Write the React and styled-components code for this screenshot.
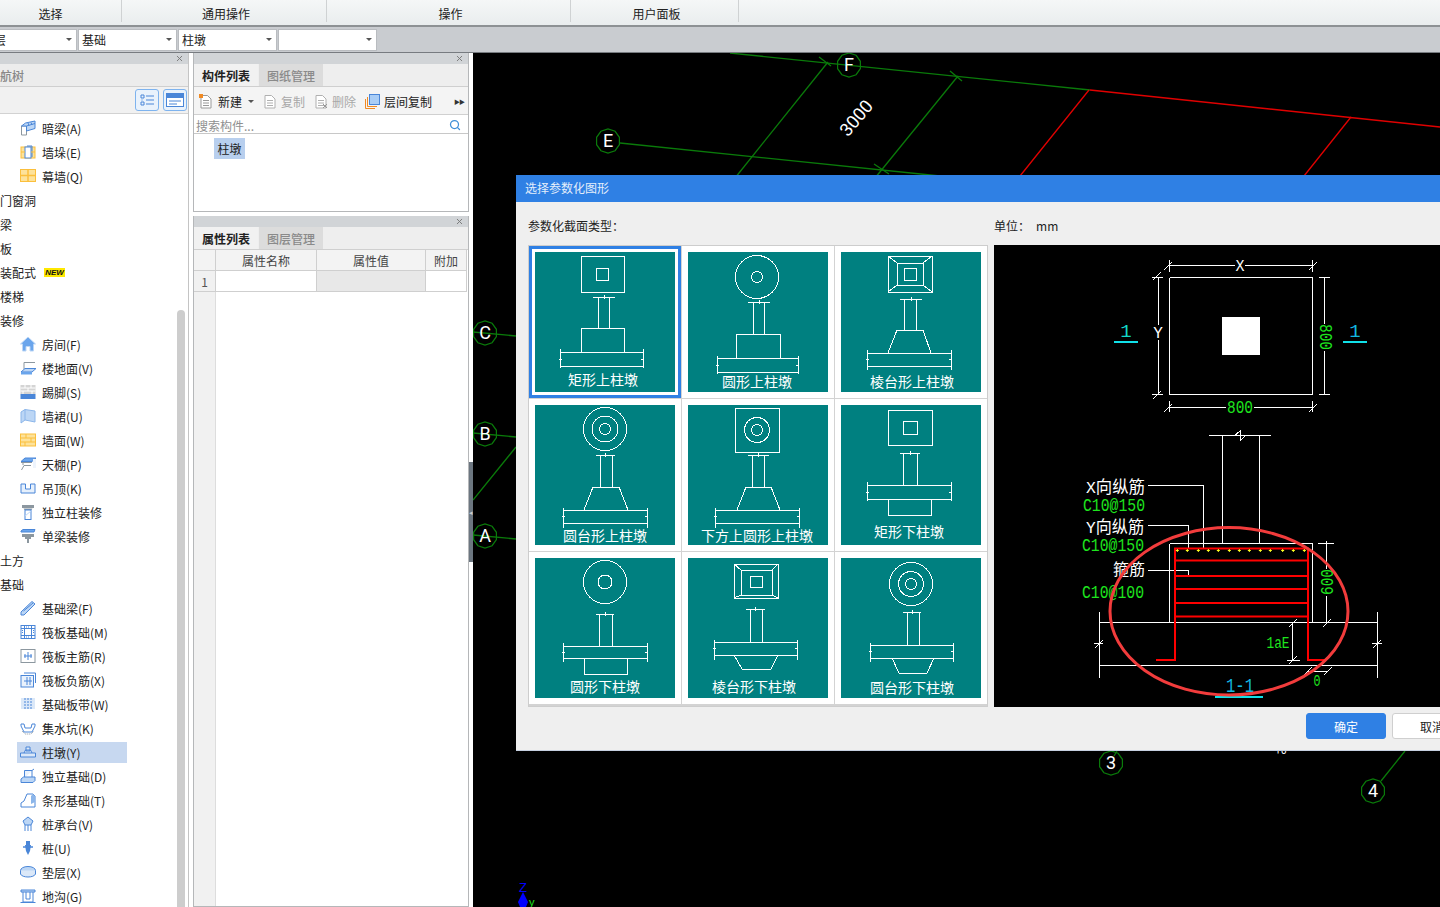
import React from 'react';
import styled, { createGlobalStyle } from 'styled-components';
import { Search, X as CloseGlyph } from 'lucide-react';

const Global = createGlobalStyle`
  html, body { margin: 0; padding: 0; height: 100%; overflow: hidden; background: #fff; }
  #root { height: 100%; }
  * { box-sizing: border-box; }
`;

const Page = styled.div`
  width: 1440px; height: 907px; display: flex; flex-direction: column; overflow: hidden;
  font-family: "Noto Sans CJK SC", "Liberation Sans", sans-serif; font-size: 12px; color: #222;
`;

const MenuBar = styled.div`
  height: 27px; flex: none; display: flex; overflow: hidden;
  background: linear-gradient(#f5f7f7, #e9edee); border-bottom: 2px solid #8d9194;
`;
const MenuSection = styled.div`
  width: ${p => p.$w}px; margin-left: ${p => p.$ml || 0}px; height: 22px; padding-top: 6px;
  padding-left: ${p => (p.$ml ? 0 : 4)}px;
  display: flex; justify-content: center; align-items: center; line-height: 16px;
  border-right: 1px solid #cfd2d3;
`;

const ComboBar = styled.div`
  height: 26px; flex: none; display: flex; align-items: flex-start; gap: 1px; padding-top: 2px;
  background: #c9ccd0; border-bottom: 1px solid #777b80; overflow: hidden;
`;
const Combo = styled.div`
  width: 99px; margin-left: ${p => p.$ml || 0}px; height: 22px; background: #fff;
  border: 1px solid #b9bcc0; display: flex; align-items: center;
  padding: 0 4px 2px 3px;
  &::after { content: ""; margin-left: auto; border: 3px solid transparent; border-top: 3px solid #555; border-bottom: 0; }
`;
const ComboClipped = styled.span`margin-left: 12px;`;

const Main = styled.div`flex: 1; display: flex; min-height: 0;`;

const LeftPanel = styled.div`
  width: 189px; flex: none; display: flex; flex-direction: column; border-right: 1px solid #c4c4c4; overflow: hidden;
`;
const CloseStrip = styled.div`
  height: 11px; flex: none; background: #d1d4d7; display: flex; align-items: center; justify-content: flex-end; padding-right: 4px; color: #777;
`;
const TreeTitle = styled.div`
  height: 23px; flex: none; background: #ececec; border-bottom: 1px solid #cfcfcf; color: #888; font-weight: 500;
  display: flex; align-items: center; margin-left: -12px; padding-left: 0;
`;
const TreeTools = styled.div`
  height: 27px; flex: none; background: #f1f1f1; border-bottom: 1px solid #d2d2d2;
  display: flex; justify-content: flex-end; align-items: center; gap: 4px; padding-right: 1px;
`;
const ViewButton = styled.div`
  width: 24px; height: 22px; border: 1px solid #7eb3ee; border-radius: 3px; background: #e9f2fc;
  display: flex; align-items: center; justify-content: center;
`;
const Tree = styled.div`
  flex: 1; position: relative; background: #fff; padding-top: 2px; overflow: hidden;
`;
const TreeRow = styled.div`height: 24px; display: flex; align-items: center;`;
const TreeLabel = styled.div`
  display: flex; align-items: center; gap: 6px; height: 21px; width: 110px; margin-left: 17px; padding-left: 3px; white-space: nowrap;
  background: ${p => (p.$active ? '#c7d8f0' : 'transparent')};
`;
const TreeGroup = styled.div`display: flex; align-items: center; gap: 8px; white-space: nowrap;`;
const NewBadge = styled.span`
  background: #ffe800; color: #111; font: italic 700 8px/9px "Liberation Sans", sans-serif; width: 21px; height: 9px; text-align: center;
`;
const ScrollThumb = styled.div`
  position: absolute; left: 177px; top: 196px; bottom: 0; width: 8px; background: #cdcdcd; border-radius: 4px 4px 0 0;
`;
const IconSvg = styled.svg`width: 16px; height: 16px; flex: none; display: block;`;

const Center = styled.div`
  width: 276px; flex: none; margin-left: 4px; display: flex; flex-direction: column; gap: 4px; min-height: 0;
`;
const SidePanel = styled.div`
  height: ${p => (p.$fill ? 'auto' : '159px')}; flex: ${p => (p.$fill ? 1 : 'none')}; min-height: 0;
  display: flex; flex-direction: column; border: 1px solid #b5b7b9; border-top: 0; background: #fff;
`;
const TabRow = styled.div`
  height: 23px; flex: none; display: flex; background: #eeeeee; border-bottom: 1px solid #cfcfcf;
`;
const Tab = styled.div`
  width: 64px; margin-right: 1px; display: flex; align-items: center; justify-content: center;
  background: ${p => (p.$on ? '#f1f1f1' : '#dcdcdc')}; color: ${p => (p.$on ? '#222' : '#8a8a8a')}; font-weight: ${p => (p.$on ? 700 : 500)};
`;
const ToolRow = styled.div`
  height: 28px; flex: none; display: flex; align-items: center; gap: 9px; padding: 1px 5px 0; background: #f4f4f4; border-bottom: 1px solid #d0d0d0;
`;
const ToolItem = styled.div`
  display: flex; align-items: center; gap: 4px; color: ${p => (p.$off ? '#a8a8a8' : '#222')};
`;
const Caret = styled.span`
  width: 0; height: 0; border: 3px solid transparent; border-top-color: #555; border-bottom: 0; margin-left: 2px;
`;
const More = styled.div`margin-left: auto; margin-right: -1px; font-size: 6px; color: #333; letter-spacing: -1px;`;
const SearchBox = styled.div`
  height: 19px; flex: none; display: flex; align-items: center; justify-content: space-between; padding: 2px 7px 0 2px; color: #8f8f8f; border-bottom: 1px solid #c8c8c8;
`;
const CompList = styled.div`flex: 1; padding: 4px 0 0 20px;`;
const CompItem = styled.div`
  width: 31px; height: 21px; background: #b8cfee; display: flex; align-items: center; justify-content: center;
`;
const PropBody = styled.div`
  flex: 1; display: grid; grid-template-columns: 22px 101px 109px 41px; grid-template-rows: 21px 21px 1fr; background: #fff; min-height: 0;
`;
const HeadCell = styled.div`
  background: #f3f3f3; color: #444; display: flex; align-items: center; justify-content: center;
  border-right: 1px solid #cfcfcf; border-bottom: 1px solid #cfcfcf;
`;
const RowCell = styled.div`
  background: ${p => p.$bg || '#fff'}; display: flex; align-items: center; justify-content: center;
  border-right: 1px solid #cfcfcf; border-bottom: 1px solid #cfcfcf; color: #555;
`;
const IndexFill = styled.div`background: #f1f1f1; border-right: 1px solid #dddddd;`;

const GripColumn = styled.div`width: 4px; flex: none; padding-top: 409px; background: #fff;`;
const Grip = styled.div`
  width: 4px; height: 100px; background: #6c7680; display: flex; align-items: center; color: #ccc; font-size: 7px; overflow: hidden;
`;

const Canvas = styled.div`flex: 1; position: relative; background: #000; overflow: hidden; min-width: 0;`;
const CanvasSvg = styled.svg`position: absolute; left: 0; top: 0; width: 967px; height: 854px; display: block;`;

const Dialog = styled.div`
  position: absolute; left: 43px; top: 122px; width: 970px; height: 576px; background: #efefef;
  border-bottom: 1px solid #c6d0e0; display: flex; flex-direction: column;
`;
const DialogTitle = styled.div`
  height: 27px; flex: none; background: #2f80e4; color: #e4eefb; display: flex; align-items: center; padding: 0 0 2px 9px;
`;
const DialogBody = styled.div`
  display: grid; grid-template-columns: 460px 1fr; column-gap: 6px; padding: 16px 0 0 12px; flex: none;
`;
const FieldLabel = styled.div`height: 16px; line-height: 16px; margin-bottom: 11px; display: flex; gap: 6px; color: #222;`;
const ShapeGrid = styled.div`
  height: 462px; border: 1px solid #cdcdcd; background: #d3d3d3;
  display: grid; grid-template-columns: repeat(3, 152px); grid-template-rows: repeat(3, 152px); gap: 1px; align-content: start;
`;
const ShapeCell = styled.div`
  background: #fff; padding: 6px; box-shadow: ${p => (p.$on ? 'inset 0 0 0 3px #2f80e4' : 'none')};
`;
const ShapeTile = styled.svg`width: 140px; height: 140px; display: block; background: #008080;`;
const TileLabel = styled.text`
  fill: #fff; font-size: 14px; text-anchor: middle; font-family: "Noto Sans CJK SC", sans-serif;
`;
const Preview = styled.div`height: 462px; background: #000; overflow: hidden;`;
const PreviewSvg = styled.svg`width: 446px; height: 462px; display: block;`;
const CadText = styled.text`
  fill: ${p => p.$c || '#fff'}; font-family: "Liberation Mono", "Noto Sans CJK SC", monospace; text-anchor: ${p => p.$a || 'middle'};
`;
const GridLetter = styled.text`
  fill: #fff; font-family: Roboto, "Liberation Sans", sans-serif; text-anchor: middle;
`;
const Footer = styled.div`
  display: flex; justify-content: flex-end; gap: 6px; margin-top: 6px; padding-right: 14px;
`;
const Btn = styled.div`
  width: 80px; height: 26px; border-radius: 3px; display: flex; align-items: center; justify-content: center;
  background: ${p => (p.$primary ? '#2f80e4' : '#fff')}; color: ${p => (p.$primary ? '#fff' : '#222')};
  border: 1px solid ${p => (p.$primary ? '#2f80e4' : '#cfcfcf')};
`;

/* ---------- drawings ---------- */
const B = '#4a86d8', LB = '#bcd6f5', Y = '#fbbf3c', LY = '#fde29a', G = '#8c979f';
const sk = { fill: 'none', stroke: B, strokeWidth: 1 };
const icons = {
  anliang: <><path d="M1.5 6 H6.5 V15 H1.5Z" fill="#fff" stroke={G} /><path d="M1.5 6 L5.5 3 L15 1 V8.5 L6.5 11 V6Z" fill={LB} stroke={B} /><path d="M6.5 6 L15 3.5 M8 3 L9 5.5 M11 2.5 L12 5" stroke={B} /></>,
  duo: <><rect x="1" y="3" width="14" height="11" fill={LY} stroke={Y} /><rect x="5" y="3" width="6" height="11" fill="#fff" stroke={B} /><path d="M7 2 H12 V13" fill="none" stroke={B} /><path d="M1 8 H5 M11 8 H15" stroke={Y} /></>,
  mu: <><rect x="0.5" y="1.5" width="15" height="12" fill={LY} stroke={Y} /><path d="M8 1.5 V13.5 M0.5 7.5 H15.5" stroke={Y} strokeWidth="1.5" /></>,
  room: <><path d="M0.5 8 L8 1 L15.5 8 H13.5 V15 H10 V10.5 H6 V15 H2.5 V8Z" fill="#6aa5ec" stroke="#bcd6f5" /></>,
  floor: <><path d="M4 9 V2.5 H15" {...sk} stroke={G} /><path d="M1 12 L5 8.5 H16 L12 12Z" fill={LB} stroke={B} /><rect x="1" y="12" width="11" height="2.5" fill="#6aa5ec" /></>,
  skirt: <><rect x="0.5" y="1" width="15" height="9" fill="#d4d4d4" /><path d="M0.5 4 H15.5 M0.5 7 H15.5 M5 1 V4 M11 1 V4 M8 4 V7 M3 7 V10 M12 7 V10" stroke="#fff" /><rect x="0.5" y="10" width="15" height="5" fill="#4a86d8" /></>,
  dado: <><path d="M1 4 L5 1.5 L15 3 V14 L5 12 L1 15Z" fill={LB} stroke="#8cb6ea" /><path d="M5 1.5 V12" stroke="#8cb6ea" /></>,
  wall: <><rect x="0.5" y="2" width="15" height="12" fill={LY} stroke={Y} /><path d="M0.5 6 H15.5 M0.5 10 H15.5 M6 2 V6 M11 6 V10 M5 10 V14" stroke={Y} /></>,
  ceil: <><path d="M1 5.5 L5 2 H16 L12 5.5Z" fill="#6aa5ec" stroke={B} /><path d="M1 6.5 H12 M3 6.5 V9 M11 9.5 H4 L1.5 14" fill="none" stroke={G} /><rect x="13" y="3" width="3" height="9" fill="#eef4fc" /></>,
  hang: <><path d="M1 4 H5.5 V9 H10.5 V4 H15 V13 H1Z" fill="#e6f0fc" stroke={B} /></>,
  colfin: <><rect x="2" y="1" width="12" height="3" fill={G} /><path d="M3.5 4.5 H12.5 L11.5 6 H4.5Z" fill={G} /><rect x="5" y="6" width="6" height="9.5" fill="#fff" stroke={B} /><path d="M5 12 L11 7" stroke={LB} /></>,
  beamfin: <><path d="M1 3 L3 1.5 H15 L14 4 H1Z" fill="#6aa5ec" stroke={B} /><rect x="2" y="6" width="12" height="3" fill={G} /><path d="M5 10 H11 M8 10 V15" stroke={G} strokeWidth="2" /></>,
  ftbeam: <><path d="M1 12 L12 1.5 L15 4 L4 15 L1 15Z" fill={LB} stroke={B} /><path d="M3.5 11 L13 3" stroke={B} /></>,
  raft: <><rect x="1" y="1.5" width="14" height="13" fill="#fff" stroke={B} /><path d="M1 4.5 H15 M1 11.5 H15 M4.5 1.5 V14.5 M11.5 1.5 V14.5" stroke={B} /><path d="M2.5 6 V10 M13.5 6 V10 M6 3 H10 M6 13 H10" stroke={B} strokeDasharray="1 1" /></>,
  raftmain: <><rect x="1" y="1.5" width="14" height="13" fill="#fff" stroke={G} /><path d="M8 4 V12 M4 8 H12" stroke={B} /><path d="M5 6 V10 M11 6 V10" stroke={B} /></>,
  raftneg: <><path d="M4 1 H15.5 V11" fill="none" stroke={B} /><rect x="1" y="3.5" width="12.5" height="11.5" fill="#eaf2fc" stroke={B} /><path d="M7 5 V13 M10 5 V13 M4 9 H12" stroke={B} /></>,
  strip: <><rect x="1" y="2" width="14" height="11" fill="#dbe8f8" /><path d="M5 2 V13 M8 2 V13 M11 2 V13" stroke={B} strokeDasharray="2 1" /></>,
  sump: <><path d="M1 4 H4 L5 8 H11 L12 4 H15 V6 L12 12 H4 L1 6Z" fill="#fff" stroke={B} /><path d="M2 11 L5 14 H11 L14 11" fill="none" stroke={G} strokeDasharray="1 1" /></>,
  pier: <><path d="M6 7 H10 V3 H6Z M0.5 9 H15.5 V13 H0.5Z M4 9 L5.5 6 H10.5 L12 9" fill="#dbe8f8" stroke={B} /></>,
  isolated: <><path d="M4.5 10 V2.5 H12 L14 1 M12 2.5 V10" fill="#eaf2fc" stroke={B} /><path d="M1 14.5 V11 L3.5 9 H15 V12.5 L13 14.5Z" fill={LB} stroke={B} /></>,
  stripft: <><path d="M1 15 V11 L4 9 L7 2 H13 L15 4 V15Z" fill="#fff" stroke={B} /><path d="M11 4 L13 2 L15 4 V10 L11 12Z" fill="#8cb6ea" /></>,
  cap: <><path d="M8 1 L13 5 L11 9 H5 L3 5Z" fill={LB} stroke={B} /><path d="M5 9 V15 M8 9 V15 M11 9 V15" stroke={B} /></>,
  pile: <><path d="M6 1 H10 V5 H11 L10 11 L8 15 L6 11 L5 5 H6Z" fill="#4a86d8" /><path d="M3 7 H13" stroke={B} strokeWidth="1.5" /></>,
  cushion: <><ellipse cx="8" cy="6.5" rx="7.5" ry="4" fill={LB} stroke={B} /><path d="M0.5 6.5 V10 C2 14 14 14 15.5 10 V6.5" fill="#dbe8f8" stroke={B} /></>,
  ditch: <><path d="M1 2 H15 V4 H1Z" fill={LB} stroke={B} /><path d="M3 4 V14 M13 4 V14 M3 14 H13 M6 4 V11 H10 V4" fill="none" stroke={B} /><path d="M0.5 14.5 H15.5" stroke={B} /></>,
};
const TreeIcon = ({ k }) => <IconSvg viewBox="0 0 16 16">{icons[k]}</IconSvg>;

const rows = [
  ['暗梁(A)', 'anliang'], ['墙垛(E)', 'duo'], ['幕墙(Q)', 'mu'], ['门窗洞'], ['梁'], ['板'], ['装配式', null, true], ['楼梯'], ['装修'],
  ['房间(F)', 'room'], ['楼地面(V)', 'floor'], ['踢脚(S)', 'skirt'], ['墙裙(U)', 'dado'], ['墙面(W)', 'wall'], ['天棚(P)', 'ceil'], ['吊顶(K)', 'hang'],
  ['独立柱装修', 'colfin'], ['单梁装修', 'beamfin'], ['土方'], ['基础'], ['基础梁(F)', 'ftbeam'], ['筏板基础(M)', 'raft'], ['筏板主筋(R)', 'raftmain'],
  ['筏板负筋(X)', 'raftneg'], ['基础板带(W)', 'strip'], ['集水坑(K)', 'sump'], ['柱墩(Y)', 'pier'], ['独立基础(D)', 'isolated'], ['条形基础(T)', 'stripft'],
  ['桩承台(V)', 'cap'], ['桩(U)', 'pile'], ['垫层(X)', 'cushion'], ['地沟(G)', 'ditch'],
];

/* tile shape helpers */
const rect = (x1, y1, x2, y2) => <rect x={x1} y={y1} width={x2 - x1} height={y2 - y1} />;
const circ = (cx, cy, r) => <circle cx={cx} cy={cy} r={r} />;
const poly = pts => <polyline points={pts} />;
const col = (x1, x2, y1, y2, d1, d2) => (
  <>
    {poly(`${x1},${y1} ${x1},${y2}`)}{poly(`${x2},${y1} ${x2},${y2}`)}{poly(`${d1},${y1} ${d2},${y1}`)}
    {poly(`${(d1 + d2) / 2},${y1 - 2} ${(d1 + d2) / 2},${y1 + 2}`)}
  </>
);
const slab = (x1, x2, y1, y2, e1, e2) => (
  <>
    {poly(`${x1},${y1} ${x2},${y1}`)}{poly(`${x1},${y2} ${x2},${y2}`)}
    {poly(`${x1},${e1} ${x1},${e2}`)}{poly(`${x2},${e1} ${x2},${e2}`)}
    {poly(`${x1 - 1},${(y1 + y2) / 2} ${x1 + 2},${(y1 + y2) / 2}`)}{poly(`${x2 - 2},${(y1 + y2) / 2} ${x2 + 1},${(y1 + y2) / 2}`)}
  </>
);
const frust = (a, b, y1, c, d, y2) => poly(`${a},${y1} ${b},${y1} ${d},${y2} ${c},${y2} ${a},${y1}`);
const diag = (x1, y1, x2, y2, a1, b1, a2, b2) => (
  <>
    {poly(`${x1},${y1} ${a1},${b1}`)}{poly(`${x2},${y1} ${a2},${b1}`)}{poly(`${x1},${y2} ${a1},${b2}`)}{poly(`${x2},${y2} ${a2},${b2}`)}
  </>
);

const tiles = [
  { label: '矩形上柱墩', lx: 68, ly: 133, s: <>{rect(46, 4, 89, 40)}{rect(61, 16, 73, 28)}{col(63, 74, 45, 76, 58, 80)}{rect(46, 76, 89, 100)}{slab(25, 108, 100, 114, 97, 116)}</> },
  { label: '圆形上柱墩', lx: 69, ly: 135, s: <>{circ(69, 25, 21.5)}{circ(69, 25, 5.5)}{col(65, 76, 50, 82, 60, 82)}{rect(48, 82, 92, 106)}{slab(29, 110, 106, 120, 104, 122)}</> },
  { label: '棱台形上柱墩', lx: 71, ly: 135, s: <>{rect(47, 4, 91, 40)}{rect(56, 11, 82, 33)}{rect(63, 16, 75, 28)}{diag(47, 4, 91, 40, 56, 11, 82, 33)}{col(63, 75, 47, 78, 59, 81)}{frust(56, 82, 78, 47, 90, 101)}{slab(26, 110, 101, 114, 98, 118)}</> },
  { label: '圆台形上柱墩', lx: 70, ly: 136, s: <>{circ(70, 24, 21.5)}{circ(70, 24, 13)}{circ(70, 24, 5.5)}{col(65, 77, 50, 82, 61, 80)}{frust(58, 84, 82, 49, 93, 105)}{slab(28, 112, 105, 118, 103, 123)}</> },
  { label: '下方上圆形上柱墩', lx: 69, ly: 136, s: <>{rect(47, 3, 91, 47)}{circ(69, 25, 12.5)}{circ(69, 25, 5.5)}{col(64, 76, 50, 82, 60, 81)}{frust(58, 83, 82, 49, 92, 105)}{slab(27, 111, 105, 118, 103, 123)}</> },
  { label: '矩形下柱墩', lx: 68, ly: 132, s: <>{rect(47, 5, 91, 40)}{rect(62, 16, 76, 29)}{col(62, 76, 48, 80, 59, 79)}{slab(26, 110, 80, 94, 77, 96)}{poly('47,94 47,110 90,110 90,94')}</> },
  { label: '圆形下柱墩', lx: 70, ly: 134, s: <>{circ(70, 24, 21.5)}{circ(70, 24, 7)}{col(64, 77, 56, 88, 61, 79)}{slab(28, 112, 88, 100, 85, 104)}{poly('49,100 49,116 92,116 92,100')}</> },
  { label: '棱台形下柱墩', lx: 66, ly: 134, s: <>{rect(46, 6, 90, 40)}{rect(53, 12, 84, 37)}{rect(62, 18, 74, 29)}{diag(46, 6, 90, 40, 53, 12, 84, 37)}{col(62, 74, 51, 84, 58, 77)}{slab(26, 109, 84, 97, 82, 102)}{poly('46,97 54,111 83,111 90,97')}</> },
  { label: '圆台形下柱墩', lx: 71, ly: 135, s: <>{circ(70, 26, 21.5)}{circ(70, 26, 12.5)}{circ(70, 26, 5.5)}{col(66, 78, 54, 87, 62, 80)}{slab(29, 112, 87, 100, 85, 104)}{poly('51,100 58,115 86,115 93,100')}</> },
];

const Bubble = ({ x, y, t, size = 18, sx = 1 }) => {
  const n = 10, r = 12;
  const pts = Array.from({ length: n }, (_, i) => {
    const a = (i / n) * Math.PI * 2 + Math.PI / 10;
    return `${(x + r * Math.cos(a)).toFixed(1)},${(y + r * Math.sin(a)).toFixed(1)}`;
  }).join(' ');
  return (
    <g>
      <polygon points={pts} fill="none" stroke="#0a7a0a" strokeWidth="1.2" />
      <GridLetter x={0} y={0} fontSize={size} transform={`translate(${x} ${y + size * 0.36}) scale(${sx} 1)`}>{t}</GridLetter>
    </g>
  );
};

const ln = (x1, y1, x2, y2) => `M${x1} ${y1} L${x2} ${y2}`;
const slash = (x, y) => ln(x - 4, y + 4, x + 4, y - 4);

const whitePath = [
  ln(1169.5, 277.5, 1312.5, 277.5), ln(1312.5, 277.5, 1312.5, 394.5), ln(1312.5, 394.5, 1169.5, 394.5), ln(1169.5, 394.5, 1169.5, 277.5),
  ln(1169.5, 265.5, 1235, 265.5), ln(1245, 265.5, 1312.5, 265.5), ln(1169.5, 260, 1169.5, 272), ln(1312.5, 260, 1312.5, 272), slash(1168, 266), slash(1313, 266),
  ln(1158.5, 277.5, 1158.5, 325), ln(1158.5, 340, 1158.5, 394), ln(1152, 277.5, 1163, 277.5), ln(1152, 394.5, 1163, 394.5), slash(1157, 276), slash(1157, 395),
  ln(1324.5, 277.5, 1324.5, 324), ln(1324.5, 351, 1324.5, 394), ln(1319, 277.5, 1330, 277.5), ln(1319, 394.5, 1330, 394.5),
  ln(1169.5, 407.5, 1226, 407.5), ln(1254, 407.5, 1312.5, 407.5), ln(1169.5, 401, 1169.5, 412), ln(1312.5, 401, 1312.5, 412), slash(1168, 408), slash(1313, 408),
  ln(1209, 435.5, 1271, 435.5), ln(1222.5, 435.5, 1222.5, 543.5), ln(1259.5, 435.5, 1259.5, 543.5),
  'M1234 436 L1240 431 L1240 441 L1245 436',
  ln(1169.5, 543.5, 1312.5, 543.5), ln(1169.5, 543.5, 1169.5, 622.5), ln(1312.5, 543.5, 1312.5, 622.5),
  ln(1099.5, 622.5, 1377.5, 622.5), ln(1099.5, 665.5, 1377.5, 665.5), ln(1099.5, 612, 1099.5, 678), ln(1377.5, 612, 1377.5, 678),
  ln(1094, 643.5, 1103, 643.5), ln(1372, 643.5, 1382, 643.5), slash(1099, 644), slash(1377, 644),
  ln(1148, 485.5, 1203.5, 485.5), ln(1203.5, 485.5, 1203.5, 548), ln(1148, 525.5, 1188.5, 525.5), ln(1188.5, 525.5, 1188.5, 548),
  ln(1148, 570.5, 1188.5, 570.5), ln(1188.5, 570.5, 1188.5, 576),
  ln(1326.5, 541, 1326.5, 569), ln(1326.5, 596, 1326.5, 623), ln(1318, 543.5, 1334, 543.5), slash(1327, 623),
  ln(1292.5, 622.5, 1292.5, 660), ln(1287, 660.5, 1300, 660.5), slash(1293, 623), slash(1293, 660),
  ln(1308, 671.5, 1328, 671.5), slash(1308, 671), slash(1328, 671),
].join(' ');
const stirrups = [560.5, 576, 589, 603, 616.5];
const dots = [352, 382, 415, 445, 475, 508, 538, 568, 601, 631, 668, 700, 733].map(z => 1060 + z / 3);

const PreviewDrawing = () => (
  <PreviewSvg viewBox="994 245 446 462">
    <path d={whitePath} stroke="#fff" strokeWidth="1" fill="none" shapeRendering="crispEdges" />
    <rect x="1222" y="317" width="38" height="38" fill="#fff" />
    <CadText x="1240" y="271" fontSize="16" textLength="9" lengthAdjust="spacingAndGlyphs">X</CadText>
    <CadText x="1158" y="338" fontSize="16">Y</CadText>
    <CadText x="1240" y="413" fontSize="18" $c="#1ee51e" textLength="26" lengthAdjust="spacingAndGlyphs">800</CadText>
    <CadText x="0" y="0" fontSize="19" $c="#1ee51e" textLength="26" lengthAdjust="spacingAndGlyphs" transform="translate(1320 337) rotate(90)">800</CadText>
    <CadText x="1126" y="337" fontSize="19" $c="#12d8c8">1</CadText>
    <CadText x="1355" y="337" fontSize="19" $c="#12b8e0">1</CadText>
    <rect x="1114" y="341" width="24" height="2" fill="#10e0e8" />
    <rect x="1343" y="341" width="24" height="2" fill="#10e0e8" />

    <g stroke="#f00" strokeWidth="2" fill="none">
      <path d="M1156 660 H1175 V548.5 H1308 V660 H1325" />
      {stirrups.map(y => <path key={y} d={`M1175 ${y} H1308`} />)}
    </g>
    <g stroke="#ffff20" strokeWidth="1">
      {dots.map(x => <path key={x} d={`M${x - 1.5} 550.5 H${x + 1.5} M${x} 549 V552`} />)}
    </g>
    <CadText x="1145" y="493" fontSize="17" $a="end" textLength="59" lengthAdjust="spacingAndGlyphs">X向纵筋</CadText>
    <CadText x="1145" y="511" fontSize="18" $a="end" $c="#1ee51e" textLength="62" lengthAdjust="spacingAndGlyphs">C10@150</CadText>
    <CadText x="1144" y="533" fontSize="17" $a="end" textLength="58" lengthAdjust="spacingAndGlyphs">Y向纵筋</CadText>
    <CadText x="1144" y="551" fontSize="18" $a="end" $c="#1ee51e" textLength="62" lengthAdjust="spacingAndGlyphs">C10@150</CadText>
    <CadText x="1145" y="575" fontSize="16" $a="end">箍筋</CadText>
    <CadText x="1144" y="598" fontSize="18" $a="end" $c="#1ee51e" textLength="62" lengthAdjust="spacingAndGlyphs">C10@100</CadText>
    <CadText x="0" y="0" fontSize="19" $c="#1ee51e" textLength="26" lengthAdjust="spacingAndGlyphs" transform="translate(1333 582) rotate(-90)">600</CadText>
    <CadText x="1278" y="648" fontSize="16" $c="#1ee51e" textLength="23" lengthAdjust="spacingAndGlyphs">1aE</CadText>
    <CadText x="1317" y="686" fontSize="16" $c="#1ee51e" textLength="7" lengthAdjust="spacingAndGlyphs">0</CadText>
    <CadText x="1240" y="692" fontSize="20" $c="#12b8e0" textLength="28" lengthAdjust="spacingAndGlyphs">1-1</CadText>
    <rect x="1215" y="696" width="48" height="2" fill="#10e0e8" />
    <ellipse cx="1229" cy="611.3" rx="119" ry="83.7" fill="none" stroke="#f23c3c" strokeWidth="3" />
  </PreviewSvg>
);

const CanvasDrawing = () => (
  <CanvasSvg viewBox="473 53 967 854">
    <g stroke="#0a7a0a" strokeWidth="1.3" fill="none">
      <path d="M730 53 L1090 90" />
      <path d="M620 143 L940 176" />
      <path d="M828 62 L735 178" />
      <path d="M958 76 L875 178" />
      <path d="M819 57 L831 66 M950 71 L962 81 M874 164 L889 174" />
      <path d="M473 332 L516 336 M473 433 L516 437 M473 535 L516 539 M473 500 L516 447" />
      <path d="M1405 751 L1381 781 M1117 751 L1114 756" />
    </g>
    <g stroke="#e00000" strokeWidth="1.3" fill="none">
      <path d="M1090 90 L1440 127 M1089 90 L1020 176 M1351 117 L1304 176" />
    </g>
    <Bubble x={849} y={65} t="F" />
    <Bubble x={608} y={141} t="E" />
    <Bubble x={485} y={333} t="C" />
    <Bubble x={485} y={434} t="B" />
    <Bubble x={485} y={536} t="A" />
    <Bubble x={1111} y={763} t="3" />
    <Bubble x={1373} y={791} t="4" />
    <GridLetter x={0} y={0} fontSize="18" transform="translate(861 122) rotate(-50)">3000</GridLetter>
    <GridLetter x={1281} y={754} fontSize="10">+0</GridLetter>
    <text x="519" y="892" fill="#0000ff" fontSize="13" fontFamily="Liberation Sans">Z</text>
    <path d="M523 892 L528 902 L526 907 H520 L518 902Z" fill="#0000ff" />
    <text x="529" y="906" fill="#1ee51e" fontSize="11" fontFamily="Liberation Sans">y</text>
  </CanvasSvg>
);

const Cross = () => <CloseGlyph size={9} strokeWidth={2.5} color="#777" />;

const DocIcon = ({ c = '#9a9a9a', size = 15, extra }) => (
  <svg width={size} height="15" viewBox={`0 0 ${size} 15`} style={{ flex: 'none' }}>
    <path d="M2 1.5 H8.5 L12 5 V14 H2Z" fill="#fff" stroke={c} />
    <path d="M4 6.5 H10 M4 9 H10 M4 11.5 H10" stroke={c} />
    {extra}
  </svg>
);

export default function App() {
  return (
    <Page>
      <Global />
      <MenuBar>
        <MenuSection $w={142} $ml={-20}>选择</MenuSection>
        <MenuSection $w={205}>通用操作</MenuSection>
        <MenuSection $w={244}>操作</MenuSection>
        <MenuSection $w={168}>用户面板</MenuSection>
      </MenuBar>
      <ComboBar>
        <Combo $ml={-22}><ComboClipped>层</ComboClipped></Combo>
        <Combo>基础</Combo>
        <Combo>柱墩</Combo>
        <Combo />
      </ComboBar>
      <Main>
        <LeftPanel>
          <CloseStrip><Cross /></CloseStrip>
          <TreeTitle>导航树</TreeTitle>
          <TreeTools>
            <ViewButton>
              <svg width="16" height="14" viewBox="0 0 16 14"><path d="M2 2 h3 v3 h-3z M2 9 h3 v3 h-3z" fill="none" stroke="#4a86d8" /><path d="M7 3 H15 M7 7 H15 M7 11 H15 M3 6.5 V7.5" stroke="#4a86d8" /></svg>
            </ViewButton>
            <ViewButton>
              <svg width="18" height="14" viewBox="0 0 18 14"><rect x="0.5" y="0.5" width="17" height="13" fill="#fff" stroke="#4a86d8" /><rect x="1" y="1" width="16" height="4" fill="#4a86d8" /><path d="M3 8 H15 M3 11 H11" stroke="#4a86d8" /></svg>
            </ViewButton>
          </TreeTools>
          <Tree>
            {rows.map(([t, k, isNew]) => (
              <TreeRow key={t}>
                {k ? (
                  <TreeLabel $active={t === '柱墩(Y)'}><TreeIcon k={k} />{t}</TreeLabel>
                ) : (
                  <TreeGroup>{t}{isNew && <NewBadge>NEW</NewBadge>}</TreeGroup>
                )}
              </TreeRow>
            ))}
            <ScrollThumb />
          </Tree>
        </LeftPanel>
        <Center>
          <SidePanel>
            <CloseStrip><Cross /></CloseStrip>
            <TabRow><Tab $on>构件列表</Tab><Tab>图纸管理</Tab></TabRow>
            <ToolRow>
              <ToolItem>
                <DocIcon extra={<rect x="0" y="0" width="4" height="4" fill="#f08a24" />} />
                <span>新建</span><Caret />
              </ToolItem>
              <ToolItem $off><DocIcon size={14} c="#b0b0b0" />复制</ToolItem>
              <ToolItem $off><DocIcon size={14} c="#b0b0b0" extra={<path d="M9 10 L13 14 M13 10 L9 14" stroke="#999" />} />删除</ToolItem>
              <ToolItem>
                <svg width="15" height="15" viewBox="0 0 15 15" style={{ flex: 'none' }}><path d="M0.5 5 V14.5 H10" fill="none" stroke="#f08a24" /><path d="M2.5 3 V12.5 H12" fill="none" stroke="#f08a24" /><rect x="4.5" y="0.5" width="10" height="10" fill="#a9cdf6" stroke="#4a86d8" /></svg>
                层间复制
              </ToolItem>
              <More>▶▶</More>
            </ToolRow>
            <SearchBox>搜索构件...<Search size={12} color="#3f8fd8" strokeWidth={2.5} /></SearchBox>
            <CompList><CompItem>柱墩</CompItem></CompList>
          </SidePanel>
          <SidePanel $fill>
            <CloseStrip><Cross /></CloseStrip>
            <TabRow><Tab $on>属性列表</Tab><Tab>图层管理</Tab></TabRow>
            <PropBody>
              <HeadCell />
              <HeadCell>属性名称</HeadCell>
              <HeadCell>属性值</HeadCell>
              <HeadCell>附加</HeadCell>
              <RowCell $bg="#f1f1f1">1</RowCell>
              <RowCell />
              <RowCell $bg="#e8e8e8" />
              <RowCell />
              <IndexFill />
            </PropBody>
          </SidePanel>
        </Center>
        <GripColumn><Grip>◂</Grip></GripColumn>
        <Canvas>
          <CanvasDrawing />
          <Dialog>
            <DialogTitle>选择参数化图形</DialogTitle>
            <DialogBody>
              <div>
                <FieldLabel>参数化截面类型：</FieldLabel>
                <ShapeGrid>
                  {tiles.map((t, i) => (
                    <ShapeCell key={t.label} $on={i === 0}>
                      <ShapeTile viewBox="0 0 140 140">
                        <g fill="none" stroke="#fff" strokeWidth="1" shapeRendering="crispEdges">{t.s}</g>
                        <TileLabel x={t.lx} y={t.ly}>{t.label}</TileLabel>
                      </ShapeTile>
                    </ShapeCell>
                  ))}
                </ShapeGrid>
              </div>
              <div>
                <FieldLabel><span>单位：</span><span>mm</span></FieldLabel>
                <Preview><PreviewDrawing /></Preview>
              </div>
            </DialogBody>
            <Footer>
              <Btn $primary>确定</Btn>
              <Btn>取消</Btn>
            </Footer>
          </Dialog>
        </Canvas>
      </Main>
    </Page>
  );
}
